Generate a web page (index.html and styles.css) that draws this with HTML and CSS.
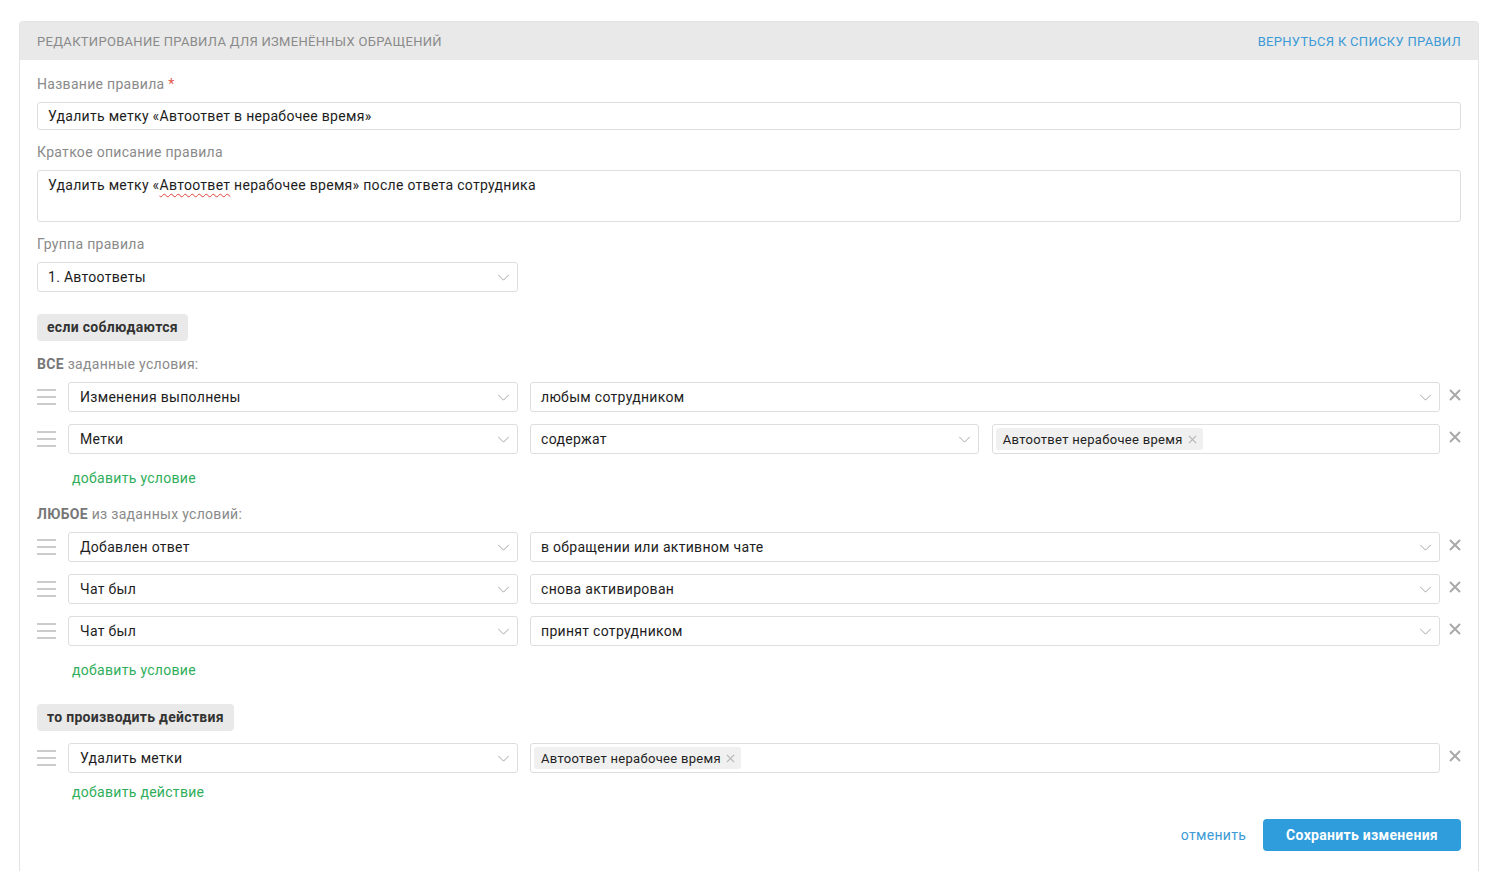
FILE: index.html
```html
<!DOCTYPE html>
<html lang="ru">
<head>
	<meta charset="UTF-8">
	<title>Редактирование правила</title>
	<link rel="stylesheet" href="styles.css">
</head>
<body>
	<div class="card">
		<div class="card-head">
			<span class="card-title">Редактирование правила для изменённых обращений</span>
			<a class="back-link" href="#">Вернуться к списку правил</a>
		</div>
		<div class="card-body">
			<div class="label">Название правила <span class="req">*</span></div>
			<div class="field">Удалить метку «Автоответ в нерабочее время»</div>

			<div class="label gap-top">Краткое описание правила</div>
			<div class="field area">Удалить метку «<span class="typo">Автоответ</span> нерабочее время» после ответа сотрудника</div>

			<div class="label gap-top">Группа правила</div>
			<div class="select group-select">1. Автоответы<svg class="chev" viewBox="0 0 14 8"><polyline points="1,1 7,7 13,1"/></svg></div>

			<div class="badge badge-if">если соблюдаются</div>

			<div class="label cond-title"><b>ВСЕ</b> заданные условия:</div>
			<div class="rows">
				<div class="row">
					<span class="handle"><i></i><i></i><i></i></span>
					<div class="select first">Изменения выполнены<svg class="chev" viewBox="0 0 14 8"><polyline points="1,1 7,7 13,1"/></svg></div>
					<div class="cells">
						<div class="select">любым сотрудником<svg class="chev" viewBox="0 0 14 8"><polyline points="1,1 7,7 13,1"/></svg></div>
					</div>
					<svg class="remove" viewBox="0 0 12 12"><path d="M1 1L11 11M11 1L1 11"/></svg>
				</div>
				<div class="row">
					<span class="handle"><i></i><i></i><i></i></span>
					<div class="select first">Метки<svg class="chev" viewBox="0 0 14 8"><polyline points="1,1 7,7 13,1"/></svg></div>
					<div class="cells">
						<div class="select">содержат<svg class="chev" viewBox="0 0 14 8"><polyline points="1,1 7,7 13,1"/></svg></div>
						<div class="tags"><span class="tag">Автоответ нерабочее время<svg viewBox="0 0 10 10"><path d="M1 1L9 9M9 1L1 9"/></svg></span></div>
					</div>
					<svg class="remove" viewBox="0 0 12 12"><path d="M1 1L11 11M11 1L1 11"/></svg>
				</div>
			</div>
			<a class="add-link" href="#">добавить условие</a>

			<div class="label cond-title any"><b>ЛЮБОЕ</b> из заданных условий:</div>
			<div class="rows">
				<div class="row">
					<span class="handle"><i></i><i></i><i></i></span>
					<div class="select first">Добавлен ответ<svg class="chev" viewBox="0 0 14 8"><polyline points="1,1 7,7 13,1"/></svg></div>
					<div class="cells">
						<div class="select">в обращении или активном чате<svg class="chev" viewBox="0 0 14 8"><polyline points="1,1 7,7 13,1"/></svg></div>
					</div>
					<svg class="remove" viewBox="0 0 12 12"><path d="M1 1L11 11M11 1L1 11"/></svg>
				</div>
				<div class="row">
					<span class="handle"><i></i><i></i><i></i></span>
					<div class="select first">Чат был<svg class="chev" viewBox="0 0 14 8"><polyline points="1,1 7,7 13,1"/></svg></div>
					<div class="cells">
						<div class="select">снова активирован<svg class="chev" viewBox="0 0 14 8"><polyline points="1,1 7,7 13,1"/></svg></div>
					</div>
					<svg class="remove" viewBox="0 0 12 12"><path d="M1 1L11 11M11 1L1 11"/></svg>
				</div>
				<div class="row">
					<span class="handle"><i></i><i></i><i></i></span>
					<div class="select first">Чат был<svg class="chev" viewBox="0 0 14 8"><polyline points="1,1 7,7 13,1"/></svg></div>
					<div class="cells">
						<div class="select">принят сотрудником<svg class="chev" viewBox="0 0 14 8"><polyline points="1,1 7,7 13,1"/></svg></div>
					</div>
					<svg class="remove" viewBox="0 0 12 12"><path d="M1 1L11 11M11 1L1 11"/></svg>
				</div>
			</div>
			<a class="add-link" href="#">добавить условие</a>

			<div class="badge badge-then">то производить действия</div>
			<div class="rows actions">
				<div class="row">
					<span class="handle"><i></i><i></i><i></i></span>
					<div class="select first">Удалить метки<svg class="chev" viewBox="0 0 14 8"><polyline points="1,1 7,7 13,1"/></svg></div>
					<div class="cells">
						<div class="tags"><span class="tag">Автоответ нерабочее время<svg viewBox="0 0 10 10"><path d="M1 1L9 9M9 1L1 9"/></svg></span></div>
					</div>
					<svg class="remove" viewBox="0 0 12 12"><path d="M1 1L11 11M11 1L1 11"/></svg>
				</div>
			</div>
			<a class="add-link add-action" href="#">добавить действие</a>

			<div class="footer">
				<a class="cancel" href="#">отменить</a>
				<button type="button" class="save">Сохранить изменения</button>
			</div>
		</div>
	</div>
</body>
</html>
```

FILE: styles.css
```css
body {
	margin: 0;
	padding: 21px 20px 0 19px;
	font-family: Roboto, "Liberation Sans", sans-serif;
	font-size: 14px;
	letter-spacing: 0.3px;
	color: #222;
	background: #fff;
}
a {
	text-decoration: none;
}
.card {
	border: 1px solid #e3e3e3;
	border-bottom: none;
	border-radius: 4px 4px 0 0;
	min-height: 850px;
	box-sizing: border-box;
}
.card-head {
	display: flex;
	justify-content: space-between;
	align-items: center;
	height: 38px;
	padding: 0 17px;
	background: #e9e9e9;
	border-radius: 3px 3px 0 0;
	font-size: 13px;
	text-transform: uppercase;
}
.card-title {
	color: #8a8a8a;
}
.back-link {
	color: #3c9ad6;
}
.card-body {
	padding: 14px 17px 0 17px;
}
.label {
	line-height: 20px;
	color: #8a8a8a;
}
.label b {
	color: #777;
	font-weight: 700;
}
.req {
	color: #e05a4e;
}
.gap-top {
	margin-top: 12px;
}
.field {
	margin-top: 8px;
	height: 28px;
	box-sizing: border-box;
	border: 1px solid #dedede;
	border-radius: 3px;
	padding: 0 10px;
	line-height: 26px;
	color: #1d1d1d;
}
.field.area {
	height: 52px;
	padding-top: 1px;
}
.typo {
	text-decoration: underline wavy #e0403a;
	text-decoration-thickness: 1px;
	text-underline-offset: 3px;
}
.select {
	position: relative;
	height: 30px;
	box-sizing: border-box;
	border: 1px solid #dedede;
	border-radius: 3px;
	padding: 0 30px 0 10px;
	line-height: 28px;
	color: #1d1d1d;
	white-space: nowrap;
}
.group-select {
	margin-top: 8px;
	width: 481px;
}
.chev {
	position: absolute;
	right: 7px;
	top: 11px;
	width: 13px;
	height: 7px;
	fill: none;
	stroke: #9a9a9a;
	stroke-width: 1;
}
.badge {
	display: inline-block;
	margin-top: 22px;
	height: 27px;
	padding: 0 10px;
	line-height: 27px;
	background: #e9e9e9;
	border-radius: 4px;
	font-weight: 700;
	color: #333;
}
.badge-then {
	margin-top: 24px;
}
.cond-title {
	margin-top: 13px;
}
.cond-title.any {
	margin-top: 16px;
}
.rows {
	display: flex;
	flex-direction: column;
	gap: 12px;
	margin-top: 8px;
}
.rows.actions {
	margin-top: 12px;
}
.row {
	display: flex;
	align-items: center;
}
.handle {
	display: flex;
	flex-direction: column;
	gap: 5px;
	width: 19px;
	margin-right: 12px;
}
.handle i {
	display: block;
	height: 2px;
	background: #cbcbcb;
}
.select.first {
	flex: 0 0 450px;
	padding-left: 11px;
}
.cells {
	flex: 1;
	display: flex;
	gap: 13px;
	margin-left: 12px;
}
.cells > * {
	flex: 1 1 50%;
}
.tags {
	height: 30px;
	box-sizing: border-box;
	border: 1px solid #dedede;
	border-radius: 3px;
	padding: 3px;
	display: flex;
	align-items: center;
}
.tag {
	display: inline-flex;
	align-items: center;
	height: 22px;
	padding: 0 6px 0 7px;
	background: #f0f0f0;
	border-radius: 3px;
	font-size: 13px;
	color: #222;
}
.tag svg {
	width: 9px;
	height: 9px;
	margin-left: 5px;
	stroke: #b5b5b5;
	stroke-width: 1.3;
}
.remove {
	width: 12px;
	height: 12px;
	margin-left: 9px;
	margin-top: -4px;
	stroke: #a9a9a9;
	stroke-width: 2;
}
.add-link {
	display: block;
	margin: 14px 0 0 35px;
	line-height: 20px;
	color: #2fae5a;
}
.add-link.add-action {
	margin-top: 9px;
}
.footer {
	display: flex;
	justify-content: flex-end;
	align-items: center;
	gap: 17px;
	margin-top: 17px;
}
.cancel {
	color: #3c9ad6;
}
.save {
	height: 32px;
	padding: 0 23px;
	border: none;
	border-radius: 4px;
	background: #2f9cdc;
	color: #fff;
	font-family: Roboto, "Liberation Sans", sans-serif;
	font-size: 14px;
	letter-spacing: 0.3px;
	font-weight: 700;
}
```
